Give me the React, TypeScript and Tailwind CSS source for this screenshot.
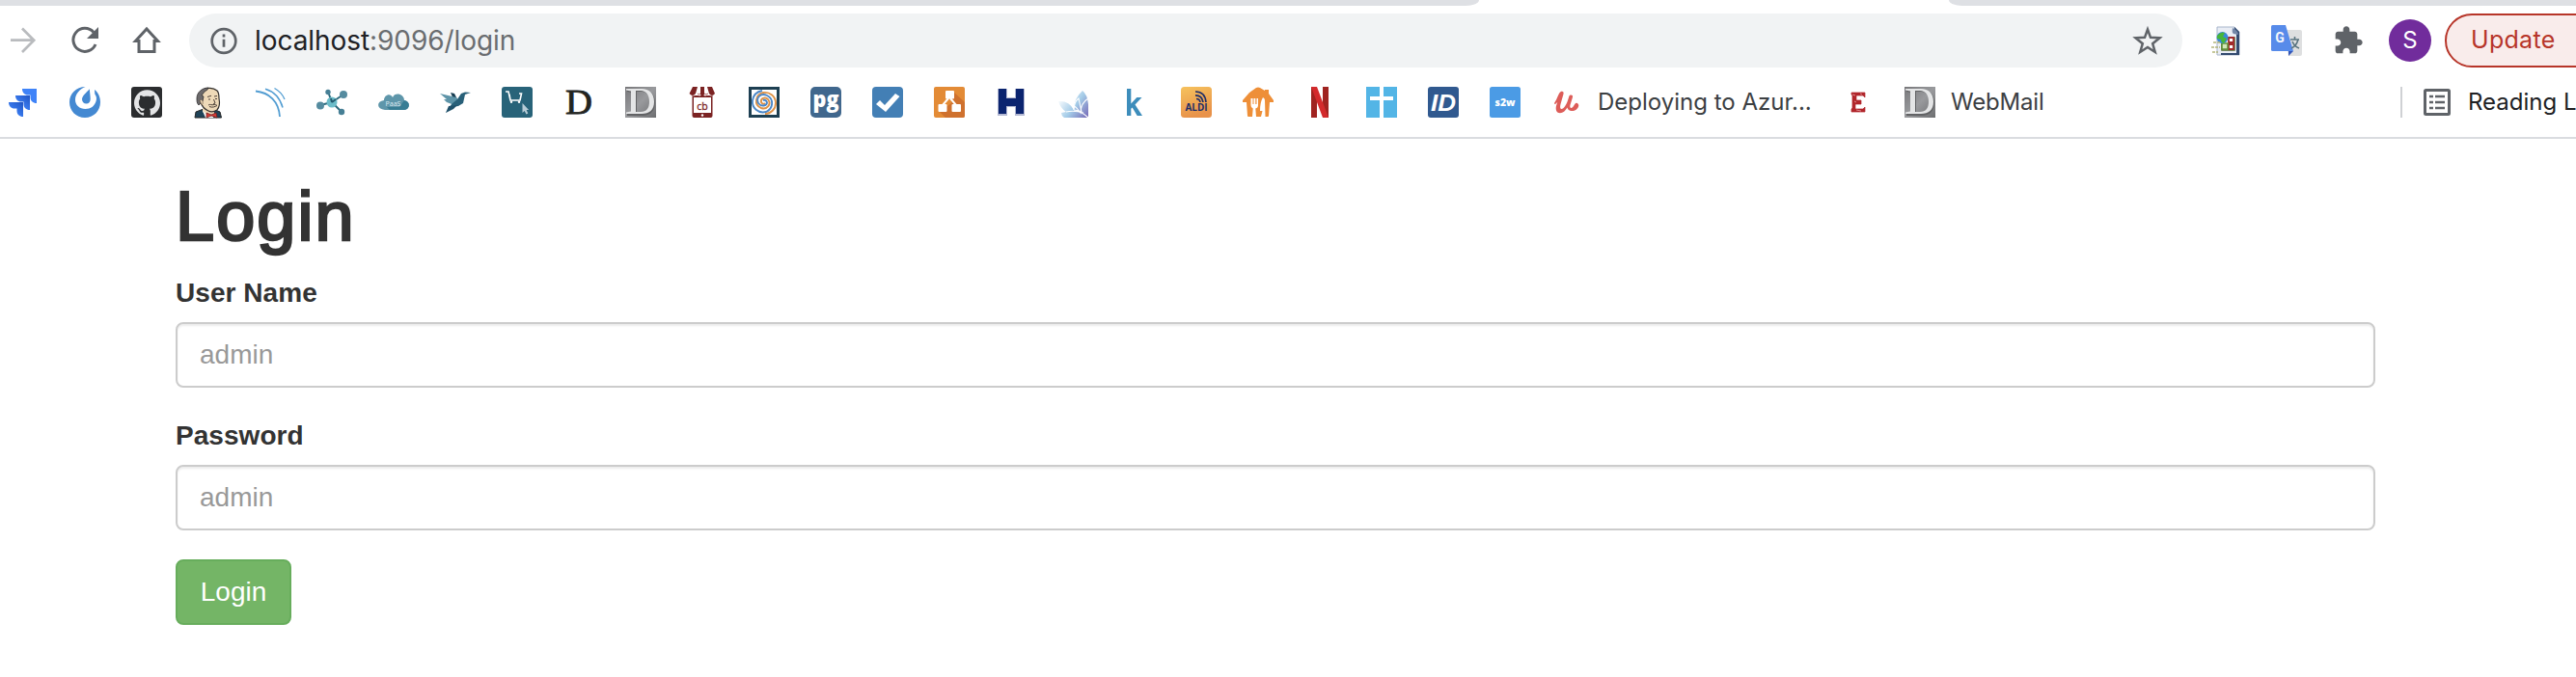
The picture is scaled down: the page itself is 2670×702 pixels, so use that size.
import type { ReactNode } from "react";
import { SiGithub } from "react-icons/si";

function Icon({ children, className = "" }: { children: ReactNode; className?: string }) {
  return (
    <svg viewBox="0 0 32 32" className={"h-8 w-8 shrink-0 overflow-visible " + className}>
      {children}
    </svg>
  );
}

const Jira = () => (
  <Icon>
    <defs>
      <linearGradient id="jira" x1="1" y1="0" x2="0.3" y2="0.8">
        <stop offset="0" stopColor="#2055c4" />
        <stop offset="1" stopColor="#3f83f8" />
      </linearGradient>
    </defs>
    <path d="M15 2h15v15c-4 0-6.500-2.500-6.500-6V8.500H21C17.500 8.500 15 6 15 2Z" fill="#3f83f8" />
    <path d="M8 9h15v15c-4 0-6.500-2.500-6.500-6v-2.500H14C10.500 15.500 8 13 8 9Z" fill="url(#jira)" />
    <path d="M1 16h15v15c-4 0-6.500-2.500-6.500-6v-2.500H7C3.500 22.500 1 20 1 16Z" fill="url(#jira)" />
  </Icon>
);

const Mattermost = () => (
  <Icon>
    <path
      d="M16.500 0C7 0 0 7 0 16c0 9 7 16 16 16s16-7 16-16c0-6-2.500-10.500-6-13l.3 4.500c2 2.500 2 5 1.200 7.500-1.500 5-5.500 8-11 8C10.500 23 6 19 6 13.500 6 7.500 10.500 2.500 16.500 0Z"
      fill="#4489d2"
    />
    <path d="M20.800 2.200c.4 4 .9 8 .9 10.500 0 3-1.700 4.800-4.200 4.800s-4.500-2-4.500-4.500c0-3.500 4.500-7 7.800-10.800Z" fill="#4489d2" />
  </Icon>
);

const Github = () => (
  <span className="flex h-8 w-8 shrink-0 items-center justify-center rounded-[3px] bg-[#2b2d2f]">
    <SiGithub className="h-[27px] w-[27px] text-[#e4e5e6]" />
  </span>
);

const Jenkins = () => (
  <Icon>
    <path d="M2 32 3 26l8-3 12 1 5 2 1.500 6Z" fill="#1f4358" stroke="#252525" />
    <path d="M10 22h12v6l-6 2-6-4Z" fill="#eed9b8" />
    <path d="M10 25l5 4 7-1-1 4h-8Z" fill="#fff" />
    <path
      d="M8 6C11 1 20-.5 25 4c2 2 2 5 2 8 .8 4 .6 9-2 12-3 2-7 2-9 1-4-2-7-5-8-9L5.500 14Z"
      fill="#eed9b8"
      stroke="#33302e"
      strokeWidth="1.200"
    />
    <path d="M16 1C9 1 4 6 4 12c0 3 0 5 2 7l2-2-1-3 3 1 1-5-2-1 3-4 3-2Z" fill="#6c6a6c" stroke="#302e2e" strokeWidth=".8" />
    <path d="M7 14c1.500-1.500 4 0 3 4l-1 1Z" fill="#eed9b8" stroke="#77614f" strokeWidth=".7" />
    <path d="M15 10.500l4-1.200M22 10l3-.5M16 13h2M23 12.500h2M21.500 13l1.500 4-2 1M16 19c2-1.500 3 .5 6-.5 1 0 2 0 3 1-2 1-5 2.500-8 1" stroke="#4c4038" strokeWidth="1" fill="none" />
    <path d="M14 27l5 2 5-2 1 5-6-2-5 2Z" fill="#d63c36" stroke="#74201e" strokeWidth=".8" />
  </Icon>
);

const Arcs = () => (
  <Icon>
    <path d="M1 4.500C15 6 25 15 26 31" fill="none" stroke="#529dd2" strokeWidth="1.800" />
    <path d="M11 2.300C20 5 26 11 29 21.500" fill="none" stroke="#529dd2" strokeWidth="1.500" />
    <path d="M20.500 1.500C25 4 29 8 31 13" fill="none" stroke="#529dd2" strokeWidth="1.300" />
  </Icon>
);

const Molecule = () => (
  <Icon>
    <path d="M16 16 12 5M16 16l12-8M16 16 4 19M16 16l10 10" stroke="#2d6a7d" strokeWidth="2" />
    <circle cx="16" cy="16" r="5.500" fill="#6cbcc9" />
    <path d="m16 16 4-3M16 16l-1-4" stroke="#245b70" strokeWidth="2" />
    <circle cx="12" cy="5.500" r="2.700" fill="#467f95" />
    <circle cx="28" cy="8" r="4" fill="#558b9f" />
    <circle cx="4" cy="19.500" r="4" fill="#558b9f" />
    <circle cx="26" cy="26" r="3.200" fill="#467f95" />
  </Icon>
);

const Paas = () => (
  <Icon>
    <path d="M7 24c-9-1-9-9-1-10C6 8 13 6 15 11c2-6 12-4 12 3 7 1 6 10 0 10Z" fill="#5e96aa" />
    <path d="M9 21h13l5-7c7 1 6 10 0 10H12Z" fill="#387d94" />
    <text x="15.500" y="20" fontSize="7" textAnchor="middle" fill="#d8e7ee" fontFamily="Noto Sans, sans-serif">PaaS</text>
  </Icon>
);

const Bird = () => (
  <Icon>
    <path d="m11 6 4 1 3 6h-4Z" fill="#173d52" />
    <path d="M0 7l17 4 3 4-5 4-8-3-3-3 3 0Z" fill="#5e94a8" />
    <path d="M18 13l4-6 4-1.500L32 6l-6 2-2 9-5 3-7 1-6 6 6-9Z" fill="#286079" />
    <path d="m9 20 9-1-4 4-8 4Z" fill="#1f506a" />
  </Icon>
);

const Cart = () => (
  <Icon>
    <rect width="32" height="32" rx="3" fill="#286379" />
    <path d="M4 5h3l2 9h10l1.500-7H18M8 8l1 6" fill="none" stroke="#fff" strokeWidth="1.600" />
    <circle cx="10" cy="15.800" r="1.200" fill="#fff" />
    <circle cx="18" cy="15.800" r="1.200" fill="#fff" />
    <path d="M21.500 17v10l2.200-2 1.800 3.500 1.800-1L25.600 24h2.500Z" fill="#b8ccd6" />
  </Icon>
);

const SerifD = () => (
  <Icon>
    <text x="2" y="28" fontSize="35" textLength="28" lengthAdjust="spacingAndGlyphs" fill="#22241f" stroke="#22241f" strokeWidth=".8" fontFamily="Liberation Serif, serif">D</text>
  </Icon>
);

const SilverD = ({ id }: { id: string }) => (
  <Icon>
    <defs>
      <linearGradient id={id} x2="1" y2="1">
        <stop stopColor="#77777a" />
        <stop offset=".5" stopColor="#999a9d" />
        <stop offset="1" stopColor="#6d6e70" />
      </linearGradient>
    </defs>
    <rect width="32" height="32" fill={"url(#" + id + ")"} />
    <path d="M1 2h16c8 0 13 5 13 13.500S25 29 17 29H1v-2l5-1V5L1 4Z M11 4v22h5c6 0 9-4 9-10.500S22 4 16 4Z" fill="#626365" fillRule="evenodd" transform="translate(1 1)" />
    <path d="M1 2h16c8 0 13 5 13 13.500S25 28 17 28H1v-1.500l5-1V4.500l-5-1Z M11 4v22h5c6 0 9-4 9-10.500S22 4 16 4Z" fill="#e4e5e6" fillRule="evenodd" />
  </Icon>
);

const Shop = () => (
  <Icon>
    <path d="M5.500 9h21v21q0 2-2 2h-17q-2 0-2-2Z" fill="#7b2323" />
    <path d="M7 11h18v16H7Z" fill="#fff" />
    <path d="M7 0h18l3 7q-3 5-6 0-3 5-6 0-3 5-6 0-3 5-6 0Z" fill="#fff" />
    <path d="M6 0h5L9 7q-3 4-6.500 0ZM14 0h4v8q-2 3-4 0ZM21 0h5l3 7q-3 4-6 0Z" fill="#7b2323" />
    <path d="M11 7q1.500 2 3 0M18 7q2 2 4 0" stroke="#a85b5b" fill="none" />
    <text x="16" y="23.500" fontSize="10.500" textAnchor="middle" fill="#7b2323" stroke="#7b2323" strokeWidth=".3" fontFamily="Open Sans, sans-serif">cb</text>
    <circle cx="16" cy="29.500" r="1.200" fill="#fff" />
  </Icon>
);

const Spiral = () => (
  <Icon>
    <rect width="32" height="32" fill="#1d3f52" />
    <rect x="3" y="3" width="26" height="26" fill="#fff" />
    <path d="M17 17q-2 2-4-1c-1-4 4-6 7-3 4 5-1 11-7 9-8-3-6-14 2-16 7-1 13 4 13 11 0 6-5 11-11 11" fill="none" stroke="#df9246" strokeWidth="1.900" />
    <path d="M15 14q3-1 4 2c0 4-6 5-9 1-3-6 3-11 9-8 8 4 6 14-1 17-8 2-15-4-14-12 1-6 5-9 10-10" fill="none" stroke="#4b87c7" strokeWidth="1.900" />
  </Icon>
);

const Pg = () => (
  <Icon>
    <rect width="32" height="32" rx="5" fill="#40678d" />
    <text x="16" y="20.500" fontSize="22" textAnchor="middle" textLength="27" lengthAdjust="spacingAndGlyphs" fontWeight="800" fill="#fff" fontFamily="Open Sans, sans-serif">pg</text>
  </Icon>
);

const Check = () => (
  <Icon>
    <rect width="32" height="32" rx="4" fill="#437fb5" />
    <path d="m4 18 4-4 5 5L24 7l4.500 3L14 26Z" fill="#fff" />
  </Icon>
);

const Diagram = () => (
  <Icon>
    <rect width="32" height="32" rx="2" fill="#e38b36" />
    <path d="M20 5 32 16v14q0 2-2 2H12l-6-6 12-9Z" fill="#cf712e" />
    <path d="M15 12 9 19M17 12l6 7" stroke="#fff" strokeWidth="2" />
    <rect x="12" y="4" width="9" height="8.500" rx="1" fill="#fff" />
    <rect x="4.500" y="18" width="9" height="8" rx="1" fill="#fff" />
    <rect x="18.500" y="18" width="9.500" height="8" rx="1" fill="#fff" />
  </Icon>
);

const LetterH = () => (
  <Icon>
    <path d="M2 2h10v9h8V2h10v28H20v-9h-8v9H2Z" fill="#b3b8d2" />
    <path d="M3 2h8v10h10V2h8v26h-8v-8H11v8H3Z" fill="#0b246f" />
  </Icon>
);

const Lotus = () => (
  <Icon>
    <defs>
      <linearGradient id="lotus" y1=".3" x2="1" y2="1">
        <stop stopColor="#fff" />
        <stop offset=".5" stopColor="#a4cce8" />
        <stop offset="1" stopColor="#7567b5" />
      </linearGradient>
    </defs>
    <path d="M1 15q11-1 16 9 0-12 9-20 5 4 6 14v14H7q-3-2-3-5l5-1q-6-4-8-11Z" fill="url(#lotus)" />
    <path d="M8 15q9 2 16 12 0-10 8-15M9 26q8-2 18 1M17 24q6 0 15 8M17 24q0-8 5-12l3 14" fill="none" stroke="#fff" strokeWidth="1.100" />
  </Icon>
);

const LetterK = () => (
  <Icon>
    <path d="M8 2h4.300v15.500L18.300 11h5.200l-7 7.500L24 30h-5.300l-5.100-8.600-1.300 1.300V30H8Z" fill="#3d8dbb" />
  </Icon>
);

const Aldi = () => (
  <Icon>
    <defs>
      <linearGradient id="aldi" x2=".3" y2="1">
        <stop stopColor="#f6c25d" />
        <stop offset="1" stopColor="#e8924a" />
      </linearGradient>
    </defs>
    <rect width="32" height="32" rx="3.500" fill="url(#aldi)" />
    <path d="M15 5q10 0 11 11M15 8.800q7 0 8 7.200M16 12.500q3.500 0 4 3.500" fill="none" stroke="#1d2d68" strokeWidth="1.700" />
    <text x="16" y="25" fontSize="10" textAnchor="middle" textLength="23" lengthAdjust="spacingAndGlyphs" fontWeight="700" fill="#1d2d68" fontFamily="Open Sans, sans-serif">ALDI</text>
  </Icon>
);

const Takeaway = () => (
  <Icon>
    <path d="M14 1q2-1 4 0l5 3V3h4v4l5 7v2h-4l-1 14q0 1-1 1H6q-1 0-1-1L4 16H0v-2L7 6Z" fill="#ee8f38" />
    <path d="M8.500 12v7q0 3 2.200 3.500L10 31h4l-.7-8.500Q16 22 16 19v-7h-1.500v6h-1.200v-6h-1.800v6h-1v-6ZM21 11q-3 5-3 14h2.500L19 31h4.500l-.5-17q0-2-2-3Z" fill="#fff" />
  </Icon>
);

const Netflix = () => (
  <Icon>
    <path d="M7 0h6v32H7ZM19 0h6v32h-6Z" fill="#a02320" />
    <path d="M7 0h6l12 32h-6Z" fill="#d32a2c" />
  </Icon>
);

const Cross = () => (
  <Icon>
    <path d="M0 0h32v32H0Z" fill="#53b5e6" />
    <path d="M14 0h4v10h10v4H18v18h-4V14H4v-4h10Z" fill="#fff" />
  </Icon>
);

const IdBadge = () => (
  <Icon>
    <rect width="32" height="32" rx="3" fill="#30598f" />
    <text x="16" y="25" fontSize="24" textAnchor="middle" textLength="26" lengthAdjust="spacingAndGlyphs" fontWeight="700" fontStyle="italic" fill="#fff" fontFamily="Liberation Sans, sans-serif">ID</text>
  </Icon>
);

const S2w = () => (
  <Icon>
    <rect width="32" height="32" rx="2.500" fill="#4b9be5" />
    <text x="16" y="19.500" fontSize="10.500" textAnchor="middle" textLength="21" lengthAdjust="spacingAndGlyphs" fontWeight="800" fill="#fff" fontFamily="Open Sans, sans-serif">s2w</text>
  </Icon>
);

const Udemy = () => (
  <Icon>
    <path
      d="M3 17C6 13 7 7 9.500 5.300c2-1.300 3.700 0 3 2.200L9.500 18c-1 4 0 6 2.500 4.500 3-2 5-8 6.300-12.500.6-2 4.500-2 3.700.8l-2.500 8c-.7 3 .5 4 2.500 2.500 1.200-1 2-3.500 3.300-4.300 1.500-.8 3 1 3 2.500-.8 4-4.500 6-8 5.500-2.300-.3-3.500-2-3.800-3.500-2 3.500-4.500 5.700-7.500 5.700-3.500 0-5-3-4-7.500l1.300-4C5 17.500 3.500 19 3 17Z"
      fill="#dd5d59"
    />
  </Icon>
);

const LetterE = () => (
  <Icon>
    <path d="M9 6h14v5l-2-2h-7v5h5v4h-6v5h8l2-2v5H9v-3l1-1V9L9 8Z" fill="#b1262b" stroke="#b1262b" strokeWidth=".7" />
    <path d="M10 8l3 1M14 24l5 1M12 15l2 1M18 7l2 1" stroke="#e7a1a2" strokeWidth=".8" />
  </Icon>
);

const FileExtension = () => (
  <Icon>
    <path d="M6 2h18l5 5v24H6Z" fill="#e9edf5" stroke="#a8b5cb" />
    <path d="M24 2l5 5v24H10v-2h16V9h-3Z" fill="#334b70" />
    <path d="M22 3q-1 5 1 6l5 1q0-4-6-7Z" fill="#7387a8" />
    <path d="M11 13h13v13H11Z" fill="#fff" stroke="#506b32" strokeWidth="1.500" />
    <path d="M18 13h5v5h-5ZM18 20h5v5h-5Z" fill="#fff" stroke="#a12b2b" strokeWidth="1.800" />
    <path d="M11 19h6v6h-6Z" fill="#d3e7b8" stroke="#5d8f34" strokeWidth="1.500" />
    <circle cx="11.500" cy="13" r="6" fill="#3b88d8" />
    <path d="M6 11q4-5 8-3l-2 4 4 2-3 5q-3-1-3-4l-4-1Z" fill="#47b53a" />
    <path d="M2 18h7M0 23h9M1 28h6" stroke="#b4b77b" strokeWidth="1.300" strokeDasharray="3 1" />
  </Icon>
);

const Translate = () => (
  <Icon>
    <path d="M14 5h16q2 0 2 2v23q0 2-2 2H18Z" fill="#dedfe0" />
    <path d="M18 27h5l-5 5Z" fill="#3457b8" />
    <path d="M1.500 0H15l8 27H1.500Q0 27 0 25.500v-24Q0 0 1.500 0Z" fill="#578bea" />
    <path d="M20 15h9M24.500 12v3M28 15q-2 7-7 9M22 17q2 5 7 7" fill="none" stroke="#59747f" strokeWidth="1.600" />
    <text x="9" y="18" fontSize="14" textAnchor="middle" fontWeight="700" fill="#f4f6fb" fontFamily="Roboto, sans-serif">G</text>
  </Icon>
);

const bookmarks = [
  Jira, Mattermost, Github, Jenkins, Arcs, Molecule, Paas, Bird, Cart, SerifD,
  () => <SilverD id="silver-a" />,
  Shop, Spiral, Pg, Check, Diagram, LetterH, Lotus, LetterK, Aldi, Takeaway, Netflix, Cross, IdBadge, S2w,
];

function TabStrip() {
  return (
    <div className="flex h-1.5 shrink-0 justify-between">
      <div className="h-1.5 w-[1533px] rounded-br-[14px_6px] bg-[#dee0e4]" />
      <div className="h-1.5 w-[650px] rounded-bl-[14px_6px] bg-[#dee0e4]" />
    </div>
  );
}

function Toolbar() {
  return (
    <div className="flex h-[72px] items-center">
      <svg viewBox="0 0 32 32" className="ml-2 h-8 w-8 shrink-0" fill="none" stroke="#b9bbbe" strokeWidth="2.700">
        <path d="M3 15.700h24M15 3.500l12.200 12.200L15 28" />
      </svg>
      <svg viewBox="0 0 32 32" className="ml-8 h-8 w-8 shrink-0" fill="none" stroke="#5f6368" strokeWidth="3">
        <path d="M25 7.500A12 12 0 1 0 27 20" />
        <path d="M30 2v12H18Z" fill="#5f6368" stroke="none" />
      </svg>
      <svg viewBox="0 0 32 32" className="ml-8 h-8 w-8 shrink-0" fill="none" stroke="#5f6368" strokeWidth="3">
        <path d="M4.500 16.500 16 4l11.500 12.500H24V27.500H8V16.500Z" />
      </svg>
      <div className="ml-7 flex h-14 w-[2066px] shrink-0 items-center rounded-full bg-[#f1f3f4] pr-5 pl-5">
        <svg viewBox="0 0 32 32" className="h-8 w-8 shrink-0" fill="none" stroke="#5f6368" strokeWidth="2.700">
          <circle cx="16" cy="16.500" r="12.300" />
          <path d="M16 14.800v8M16 9.500v3" />
        </svg>
        <span className="ml-4 font-['Inter',sans-serif] text-[28px] leading-8 tracking-[-0.07px] whitespace-nowrap text-[#6a6d70]">
          <span className="text-[#202124]">localhost</span>:9096/login
        </span>
        <svg viewBox="0 0 32 32" className="ml-auto h-8 w-8 shrink-0" fill="none" stroke="#5f6368" strokeWidth="2.500">
          <path d="m16 4.500 3 8.300 9.500.5-7.300 6 2.500 8.700-7.700-5-7.700 5 2.500-8.700-7.300-6 9.500-.5Z" />
        </svg>
      </div>
      <div className="ml-[30px] flex shrink-0 items-center">
        <FileExtension />
        <span className="ml-[30px] flex"><Translate /></span>
        <svg viewBox="0 0 24 24" className="ml-8 h-8 w-8 shrink-0" fill="#5f6368">
          <path d="M20.500 11H19V7c0-1.100-.9-2-2-2h-4V3.500C13 2.120 11.880 1 10.500 1S8 2.120 8 3.500V5H4c-1.100 0-1.990.9-1.990 2v3.800H3.500c1.490 0 2.700 1.210 2.700 2.700s-1.210 2.700-2.700 2.700H2V20c0 1.100.9 2 2 2h3.800v-1.500c0-1.490 1.210-2.700 2.700-2.700 1.490 0 2.700 1.210 2.700 2.700V22H17c1.100 0 2-.9 2-2v-4h1.500c1.380 0 2.500-1.120 2.500-2.500S21.880 11 20.500 11Z" />
        </svg>
      </div>
      <div className="ml-[26px] flex h-11 w-11 shrink-0 items-center justify-center rounded-full bg-[#712c9c] font-['Inter',sans-serif] text-2xl text-white">
        S
      </div>
      <div className="ml-3.5 flex h-14 w-[190px] shrink-0 items-center rounded-l-full border-2 border-[#b73529] bg-[#f9eceb] pl-[25px] font-['Inter',sans-serif] text-[25px] tracking-[0.3px] text-[#b73529]">
        Update
      </div>
    </div>
  );
}

function BookmarkBar() {
  return (
    <div className="flex h-[66px] shrink-0 items-center border-b-2 border-[#dadce0] pb-2 pl-2 font-['Inter',sans-serif] text-2xl text-[#3c4043]">
      <div className="flex items-center gap-8">
        {bookmarks.map((Bookmark, i) => (
          <Bookmark key={i} />
        ))}
        <Udemy />
      </div>
      <span className="ml-4 w-[221px] shrink-0 whitespace-nowrap">Deploying to Azur...</span>
      <span className="ml-[33px] flex gap-8">
        <LetterE />
        <SilverD id="silver-b" />
      </span>
      <span className="ml-4 whitespace-nowrap tracking-[-0.2px]">WebMail</span>
      <span className="ml-auto h-8 w-0.5 shrink-0 bg-[#cfd1d4]" />
      <svg viewBox="0 0 32 32" className="ml-5 h-8 w-8 shrink-0" fill="none" stroke="#5f6368">
        <rect x="3.500" y="3.500" width="25" height="25" rx="1" strokeWidth="3" />
        <path d="M8 10h4M8 16h4M8 22h4M14 10h10M14 16h10M14 22h10" strokeWidth="2.700" />
      </svg>
      <span className="ml-4 w-[112px] shrink-0 overflow-hidden whitespace-nowrap text-[#202124]">Reading List</span>
    </div>
  );
}

function Field({ id, label, type }: { id: string; label: string; type: string }) {
  return (
    <div className="mb-[30px]">
      <label htmlFor={id} className="mb-2.5 block leading-10 font-bold tracking-[0.05px]">{label}</label>
      <input
        id={id}
        type={type}
        placeholder="admin"
        className="block h-[68px] w-full rounded-lg border-2 border-[#cccccc] bg-white px-[23px] shadow-[inset_0_2px_2px_rgba(0,0,0,0.075)] outline-none placeholder:text-[#999999]"
      />
    </div>
  );
}

export default function App() {
  return (
    <div className="flex h-[702px] w-[2670px] flex-col overflow-hidden bg-white">
      <TabStrip />
      <Toolbar />
      <BookmarkBar />
      <main className="ml-[182px] w-[2280px] pt-[41px] font-['Liberation_Sans',Arial,sans-serif] text-[28px] leading-10 text-[#333333]">
        <h1 className="mb-5 text-[72px] leading-[79px] font-normal tracking-[2.1px] [-webkit-text-stroke:2.6px_#333333]">Login</h1>
        <form onSubmit={(e) => e.preventDefault()}>
          <Field id="username" label="User Name" type="text" />
          <Field id="password" label="Password" type="password" />
          <button type="submit" className="block h-[68px] w-[120px] rounded-lg border-2 border-[#67ad5c] bg-[#74b566] text-white">
            Login
          </button>
        </form>
      </main>
    </div>
  );
}
